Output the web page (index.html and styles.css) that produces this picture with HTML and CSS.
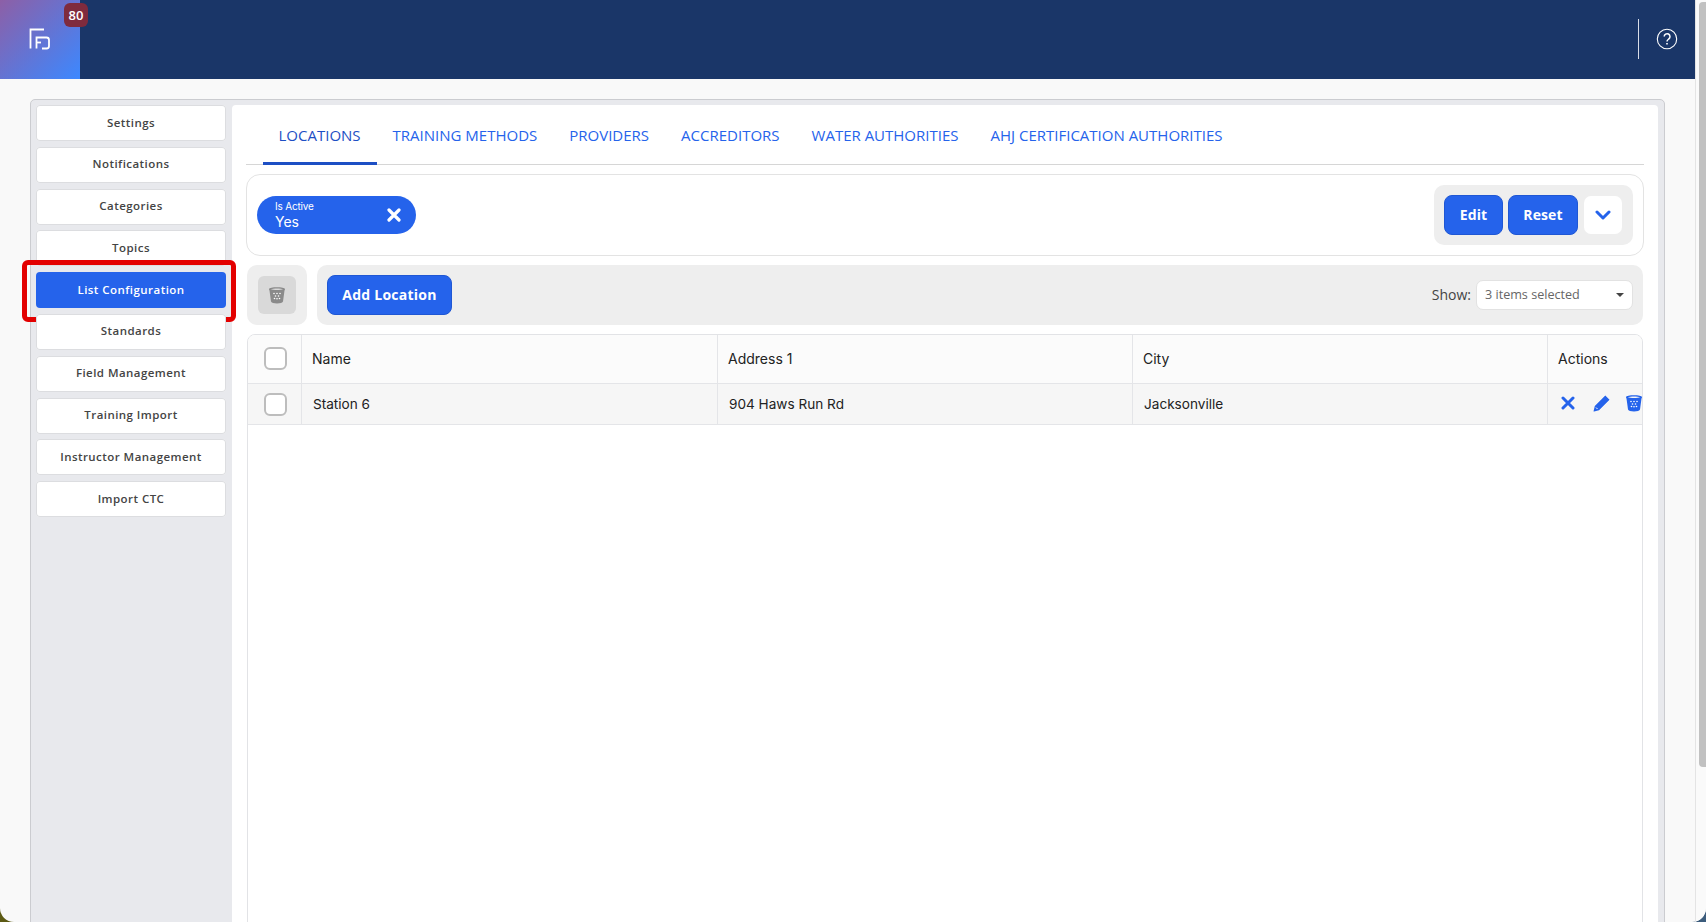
FILE: index.html
```html
<!DOCTYPE html>
<html lang="en">
<head>
<meta charset="utf-8">
<title>List Configuration</title>
<link rel="stylesheet" href="styles.css">
</head>
<body>
<svg class="defs" width="0" height="0" aria-hidden="true">
  <symbol id="i-bin" viewBox="0 0 16 18">
    <path fill-rule="evenodd" d="M0 3.2C0 .6 16 .6 16 3.2c0 .5-.3 1-.5 1.3L14 15.6c-.3 2.6-11.700 2.600-12 0L.5 4.500C.3 4.200 0 3.700 0 3.200zM2 3.200c1.600 1 10.400 1 12 0-1.600-1-10.400-1-12 0z"/>
    <g fill="#fff" class="dots">
      <circle cx="5" cy="7.500" r=".8"/><circle cx="8" cy="7.500" r=".8"/><circle cx="11" cy="7.500" r=".8"/>
      <circle cx="6.500" cy="10" r=".8"/><circle cx="9.500" cy="10" r=".8"/>
      <circle cx="5.500" cy="12.500" r=".8"/><circle cx="8" cy="12.800" r=".8"/><circle cx="10.500" cy="12.500" r=".8"/>
    </g>
  </symbol>
</svg>
<div class="window">
  <div class="page">
    <header class="topbar">
      <div class="logo">
        <svg class="logo-mark" viewBox="0 0 22 22" width="22" height="22" fill="none" stroke="#fff" stroke-width="1.800">
          <path d="M1.500 20.500V1.500H15"/>
          <path d="M7.500 20.500V9.500H17.500a2.500 2.500 0 0 1 2.500 2.500v6a2.500 2.500 0 0 1-2.500 2.500H13"/>
          <path d="M7.500 14.500H12"/>
        </svg>
        <span class="badge">80</span>
      </div>
      <div class="topbar-right">
        <span class="divider"></span>
        <svg class="help" viewBox="0 0 22 22" width="22" height="22" fill="none" stroke="#fff" stroke-width="1.100">
          <circle cx="11" cy="11" r="9.700"/>
          <path d="M8.200 8.600a2.900 2.900 0 1 1 4.500 2.400c-1 .7-1.700 1.200-1.700 2.400" stroke-width="1.500"/>
          <path d="M11 15v1.600" stroke-width="1.600"/>
        </svg>
      </div>
    </header>
    <main class="main">
      <div class="card">
        <nav class="side">
          <a class="side-btn">Settings</a>
          <a class="side-btn">Notifications</a>
          <a class="side-btn">Categories</a>
          <a class="side-btn">Topics</a>
          <a class="side-btn active">List Configuration<span class="highlight"></span></a>
          <a class="side-btn">Standards</a>
          <a class="side-btn">Field Management</a>
          <a class="side-btn">Training Import</a>
          <a class="side-btn">Instructor Management</a>
          <a class="side-btn">Import CTC</a>
        </nav>
        <section class="panel">
          <div class="tabs">
            <a class="tab active">LOCATIONS</a>
            <a class="tab">TRAINING METHODS</a>
            <a class="tab">PROVIDERS</a>
            <a class="tab">ACCREDITORS</a>
            <a class="tab">WATER AUTHORITIES</a>
            <a class="tab">AHJ CERTIFICATION AUTHORITIES</a>
          </div>
          <div class="filters">
            <div class="chip">
              <div class="chip-text">
                <span class="chip-label">Is Active</span>
                <span class="chip-value">Yes</span>
              </div>
              <svg class="chip-x" viewBox="0 0 14 14" width="14" height="14" fill="none" stroke="#fff" stroke-width="3.200" stroke-linecap="round"><path d="M2 2l10 10M12 2L2 12"/></svg>
            </div>
            <div class="filter-actions">
              <button class="btn btn-edit">Edit</button>
              <button class="btn btn-reset">Reset</button>
              <button class="btn-chevron">
                <svg viewBox="0 0 16 10" width="16" height="10" fill="none" stroke="#2563eb" stroke-width="3" stroke-linecap="round" stroke-linejoin="round"><path d="M2 2l6 6 6-6"/></svg>
              </button>
            </div>
          </div>
          <div class="toolbar-row">
            <div class="bulk">
              <span class="bulk-btn"><svg class="bulk-icon" width="16" height="18"><use href="#i-bin"/></svg></span>
            </div>
            <div class="toolbar">
              <button class="btn btn-add">Add Location</button>
              <div class="show">
                <span class="show-label">Show:</span>
                <div class="select"><span>3 items selected</span><i class="caret"></i></div>
              </div>
            </div>
          </div>
          <div class="table-wrap">
            <table class="grid">
              <colgroup>
                <col class="c-check"><col class="c-name"><col class="c-addr"><col class="c-city"><col>
              </colgroup>
              <thead>
                <tr>
                  <th class="check"><input class="box" type="checkbox"></th>
                  <th>Name</th>
                  <th>Address 1</th>
                  <th>City</th>
                  <th>Actions</th>
                </tr>
              </thead>
              <tbody>
                <tr>
                  <td class="check"><input class="box" type="checkbox"></td>
                  <td>Station 6</td>
                  <td>904 Haws Run Rd</td>
                  <td>Jacksonville</td>
                  <td class="actions">
                    <div class="action-icons">
                      <svg viewBox="0 0 14 14" width="14" height="14" fill="none" stroke="#2563eb" stroke-width="3" stroke-linecap="round"><path d="M2 2l10 10M12 2L2 12"/></svg>
                      <svg viewBox="0 0 18 18" width="18" height="18" fill="#2563eb"><path d="M12.300 1.500l4.200 4.200L6 16.200l-4.900 1.200c-.4.100-.6-.1-.5-.5L1.800 12z"/><path d="M3 13.500l1.500 1.500" stroke="#fff" stroke-width="1"/></svg>
                      <svg class="bin" width="16" height="18"><use href="#i-bin"/></svg>
                    </div>
                  </td>
                </tr>
              </tbody>
            </table>
          </div>
        </section>
      </div>
    </main>
  </div>
  <div class="rail"><div class="thumb"></div></div>
</div>
</body>
</html>
```

FILE: styles.css
```css
* { box-sizing: border-box; }

html, body {
  margin: 0;
  height: 100%;
  overflow: hidden;
}

body {
  background: linear-gradient(90deg, #5c5a14 50%, #3c5c7c 50%);
  font-family: "Open Sans", "Noto Sans", sans-serif;
}

.defs { position: absolute; }

.window {
  display: flex;
  height: 922px;
  overflow: hidden;
  border-radius: 0 0 14px 14px;
  background: #f9f9f9;
}

.page {
  flex: 1;
  display: flex;
  flex-direction: column;
  min-width: 0;
}

/* top bar */
.topbar {
  flex: none;
  height: 79px;
  display: flex;
  justify-content: space-between;
  background: #1a3668;
}

.logo {
  position: relative;
  width: 80px;
  display: flex;
  align-items: center;
  justify-content: center;
  padding-bottom: 2px;
  background: linear-gradient(135deg, #8d5fa6 0%, #3c88ff 100%);
}

.badge {
  position: absolute;
  left: 64px;
  top: 3px;
  width: 24px;
  height: 24px;
  display: flex;
  align-items: center;
  justify-content: center;
  border-radius: 6px;
  background: #7f2b3d;
  color: #fff;
  font-size: 13px;
  font-weight: 600;
}

.topbar-right {
  display: flex;
  align-items: center;
  gap: 17px;
  padding: 0 17px 2px 0;
}

.divider {
  width: 1px;
  height: 40px;
  background: #d8dde8;
}

/* main */
.main {
  flex: 1;
  min-height: 0;
  padding: 20px 30px 0;
}

.card {
  display: flex;
  gap: 5.500px;
  min-height: 860px;
  padding: 5px 6px 0 5px;
  border: 1px solid #cbccd0;
  border-radius: 5px;
  background: #e8e9ed;
}

/* side menu */
.side {
  flex: none;
  width: 190px;
  display: flex;
  flex-direction: column;
  gap: 5.800px;
}

.side-btn {
  position: relative;
  height: 36px;
  display: flex;
  align-items: center;
  justify-content: center;
  padding-bottom: 2px;
  border-radius: 4px;
  background: #fff;
  box-shadow: inset 0 0 0 1px #dcdde0;
  color: #444;
  font-size: 11.500px;
  font-weight: 600;
  letter-spacing: .45px;
}

.side-btn.active {
  background: #2563eb;
  box-shadow: none;
  color: #fff;
}

.highlight {
  position: absolute;
  left: -14px;
  right: -10px;
  top: -12px;
  bottom: -13.500px;
  border: 5px solid #e30000;
  border-radius: 6px;
}

/* panel */
.panel {
  flex: 1;
  min-width: 0;
  display: flex;
  flex-direction: column;
  padding: 0 14px 0 14.500px;
  border-radius: 4px 4px 0 0;
  background: #fff;
}

.tabs {
  display: flex;
  height: 59.500px;
  padding-left: 16.500px;
  border-bottom: 1.500px solid #d6d6d6;
}

.tab {
  display: flex;
  align-items: center;
  padding: 3px 16px 0;
  border-bottom: 3px solid transparent;
  margin-bottom: -1px;
  color: #2563eb;
  font-size: 15px;
  white-space: nowrap;
}

.tab.active {
  border-bottom-color: #1d4fc4;
  color: #1d4fc4;
}

.filters {
  height: 82px;
  margin-top: 9.500px;
  display: flex;
  align-items: center;
  justify-content: space-between;
  padding: 0 10px;
  border: 1.500px solid #e3e3e3;
  border-radius: 14px;
}

.chip {
  width: 159px;
  height: 38px;
  display: flex;
  align-items: center;
  justify-content: space-between;
  padding: 0 15px 0 18px;
  border-radius: 19px;
  background: #2563eb;
  color: #fff;
}

.chip-text {
  display: flex;
  flex-direction: column;
}

.chip-label {
  font-family: "Inter", sans-serif;
  font-size: 10px;
  line-height: 13px;
  letter-spacing: -.2px;
}

.chip-value {
  font-family: "Inter", sans-serif;
  font-size: 14px;
  line-height: 18px;
}

.filter-actions {
  width: 199px;
  height: 60px;
  display: flex;
  align-items: center;
  padding-left: 10px;
  border-radius: 10px;
  background: #eee;
}

.btn {
  height: 40px;
  padding: 0 0 2px;
  border: 1px solid #1f57d4;
  border-radius: 8px;
  background: #2563eb;
  color: #fff;
  font-family: inherit;
  font-size: 14px;
  font-weight: 700;
  letter-spacing: .1px;
}

.btn-edit { width: 59px; }
.btn-reset { width: 70px; margin-left: 5px; }
.btn-add { width: 125px; padding-bottom: 0; letter-spacing: .25px; }

.btn-chevron {
  width: 38px;
  height: 38px;
  margin-left: 6px;
  padding: 0;
  display: flex;
  align-items: center;
  justify-content: center;
  border: 0;
  border-radius: 7px;
  background: #fff;
}

.toolbar-row {
  display: flex;
  gap: 10px;
  height: 60px;
  margin: 8.500px 1px 0 1px;
}

.bulk {
  width: 60px;
  display: flex;
  align-items: center;
  justify-content: center;
  border-radius: 10px;
  background: #eee;
}

.bulk-btn {
  width: 38px;
  height: 38px;
  display: flex;
  align-items: center;
  justify-content: center;
  border-radius: 6px;
  background: #d9d9d9;
}

.bulk-icon { fill: #8a8a8a; }

.toolbar {
  flex: 1;
  display: flex;
  align-items: center;
  justify-content: space-between;
  padding: 0 10px;
  border-radius: 10px;
  background: #eee;
}

.show {
  display: flex;
  align-items: center;
  gap: 5px;
}

.show-label {
  color: #444;
  font-size: 14px;
}

.select {
  width: 157px;
  height: 30px;
  display: flex;
  align-items: center;
  justify-content: space-between;
  padding: 0 8px;
  border: 1px solid #e2e2e2;
  border-radius: 7px;
  background: #fff;
  color: #666;
  font-size: 12.600px;
}

.caret {
  width: 0;
  height: 0;
  border-left: 4px solid transparent;
  border-right: 4px solid transparent;
  border-top: 4px solid #444;
}

/* table */
.table-wrap {
  flex: 1;
  margin: 9px 1px 0 .5px;
  border: 1px solid #e2e3e6;
  border-radius: 8px 8px 0 0;
  overflow: hidden;
}

.grid {
  width: 100%;
  table-layout: fixed;
  border-collapse: collapse;
  font-family: "Inter", sans-serif;
  font-size: 14px;
  color: #222;
}

.c-check { width: 54px; }
.c-name { width: 416px; }
.c-addr { width: 415px; }
.c-city { width: 415px; }

.grid th,
.grid td {
  padding: 0 10px 1px;
  border-right: 1px solid #e4e5e8;
  border-bottom: 1px solid #e4e5e8;
  text-align: left;
  font-weight: 400;
}

.grid th:last-child,
.grid td:last-child { border-right: 0; }

.grid th {
  height: 49px;
  background: #fbfbfb;
}

.grid td {
  height: 41px;
  padding-left: 11px;
  background: #f6f6f6;
  font-size: 13.600px;
}

.grid .check {
  padding: 0 0 0 16px;
}

.box {
  display: block;
  width: 23px;
  height: 23px;
  margin: 0;
  appearance: none;
  border: 2px solid #bdbdbd;
  border-radius: 6px;
  background: #fff;
}

.grid .actions {
  padding: 0 0 2px 13px;
  overflow: hidden;
}

.action-icons {
  display: flex;
  align-items: center;
  gap: 18px;
  white-space: nowrap;
}

.action-icons svg { flex: none; }

.bin {
  margin-left: -3px;
  fill: #2563eb;
}

/* scrollbar */
.rail {
  flex: none;
  width: 11px;
  border-left: 1px solid #e4e4e4;
  background: #fafafa;
}

.thumb {
  width: 7px;
  height: 765px;
  margin: 2px 0 0 3px;
  border-radius: 4px 0 0 4px;
  background: #c1c1c1;
}
```
